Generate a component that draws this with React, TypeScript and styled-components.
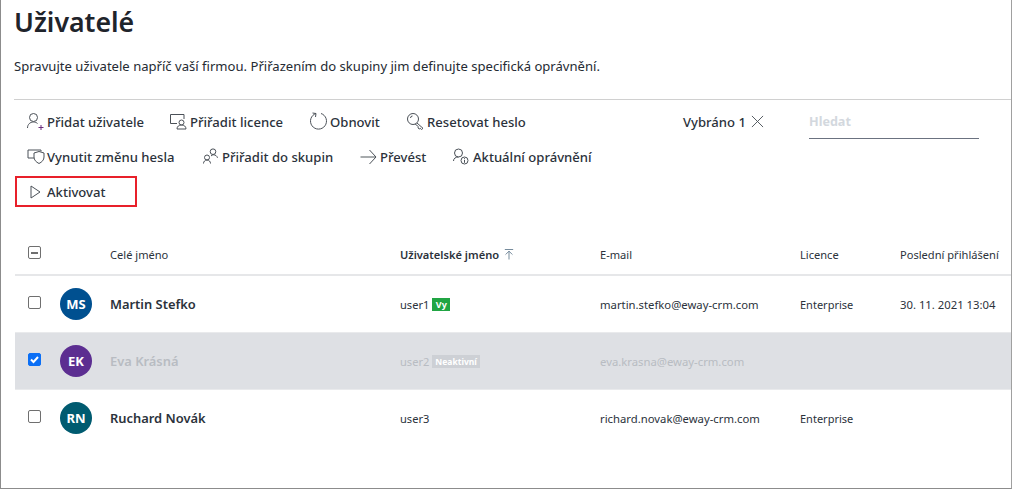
import React from 'react';
import styled, { createGlobalStyle } from 'styled-components';

const GlobalStyle = createGlobalStyle`
  html, body {
    margin: 0;
    padding: 0;
    background: #fff;
  }
  body {
    font-family: 'Noto Sans', 'Open Sans', sans-serif;
    color: #252b33;
  }
`;

const Page = styled.div`
  box-sizing: border-box;
  width: 1012px;
  height: 489px;
  overflow: hidden;
  border: solid 1px #8c8c8c;
  border-top: none;
  border-right-color: #a0a0a0;
`;

const Heading = styled.div`
  height: 99px;
  margin-left: 13px;
  border-bottom: solid 1px #d0d0d0;
  h1 {
    margin: 0;
    padding-top: 4px;
    font-size: 26.7px;
    line-height: 36px;
    font-weight: 600;
    color: #1f242b;
  }
  p {
    margin: 17px 0 0;
    font-size: 13.08px;
    line-height: 18px;
    color: #252b33;
  }
`;

const Toolbar = styled.div`
  display: grid;
  grid-template-columns: 1fr 330px;
  height: 134px;
  padding-left: 14px;
`;

const Commands = styled.div`
  display: flex;
  flex-direction: column;
  padding-top: 4px;
`;

const CommandRow = styled.div`
  display: flex;
  height: 35px;
  align-items: center;
  padding-left: 11px;
`;

const Command = styled.div<{ $width: number }>`
  display: flex;
  align-items: center;
  gap: 1px;
  width: ${({ $width }) => $width}px;
  font-size: 13.1px;
  font-weight: 500;
  color: #2b323b;
  white-space: nowrap;
  svg {
    flex: none;
    width: 20px;
    height: 20px;
  }
`;

const HighlightBox = styled.div`
  box-sizing: border-box;
  display: flex;
  align-items: center;
  width: 122px;
  height: 31px;
  margin-left: -11px;
  padding-left: 9px;
  border: solid 2px #e8202a;
`;

const SelectionArea = styled.div`
  display: grid;
  grid-template-columns: 128px 170px;
  align-items: start;
`;

const Selection = styled.div`
  display: flex;
  gap: 5px;
  padding-top: 12px;
  height: 20px;
  padding-left: 2px;
  font-size: 13.1px;
  font-weight: 500;
  line-height: 20px;
  color: #2b323b;
  svg {
    width: 13px;
    height: 13px;
    margin-top: 3px;
  }
`;

const SearchBox = styled.div`
  box-sizing: border-box;
  height: 39px;
  padding-top: 12px;
  border-bottom: solid 1px #6b7280;
  font-size: 12.6px;
  font-weight: 700;
  line-height: 20px;
  color: #d3d8de;
`;

const Row = styled.div<{ $selected?: boolean }>`
  display: grid;
  grid-template-columns: 45px 50px 290px 200px 200px 100px 1fr;
  align-items: center;
  height: 56px;
  margin-left: 14px;
  border-bottom: solid 1px #e9eaec;
  background: ${({ $selected }) => ($selected ? '#dee0e4' : 'transparent')};
  font-size: 11.3px;
  color: ${({ $selected }) => ($selected ? '#b8bcc2' : '#2b323b')};
  white-space: nowrap;
  &:last-child {
    border-bottom: none;
  }
`;

const HeaderRow = styled(Row)`
  box-sizing: border-box;
  height: 42px;
  border-bottom: solid 2px #e6e7e9;
`;

const HeaderCell = styled.div<{ $sorted?: boolean }>`
  display: flex;
  align-items: center;
  gap: 5px;
  font-size: 11.1px;
  font-weight: ${({ $sorted }) => ($sorted ? 600 : 400)};
  svg {
    width: 10px;
    height: 13px;
  }
`;

const Check = styled.div<{ $checked?: boolean }>`
  box-sizing: border-box;
  display: flex;
  align-items: center;
  justify-content: center;
  width: 13px;
  height: 13px;
  margin-left: 13px;
  margin-top: -3px;
  border-radius: 2px;
  border: solid 1px ${({ $checked }) => ($checked ? '#0b6ff5' : '#6f6f6f')};
  background: ${({ $checked }) => ($checked ? '#0b6ff5' : '#fff')};
  svg {
    width: 11px;
    height: 11px;
  }
`;

const Dash = styled.span`
  width: 7px;
  height: 2px;
  background: #6f6f6f;
`;

const Avatar = styled.div<{ $color: string }>`
  display: flex;
  align-items: center;
  justify-content: center;
  width: 32px;
  height: 32px;
  border-radius: 50%;
  background: ${({ $color }) => $color};
  color: #fff;
  font-size: 13px;
  font-weight: 700;
`;

const Name = styled.div<{ $selected?: boolean }>`
  font-size: 12.9px;
  font-weight: 600;
  color: ${({ $selected }) => ($selected ? '#b8bcc2' : '#2b323b')};
`;

const UserCell = styled.div`
  display: flex;
  align-items: center;
  gap: 3px;
  font-size: 11.1px;
`;

const LicenceCell = styled.div`
  font-size: 11px;
`;

const Tag = styled.span<{ $color: string; $faded?: boolean }>`
  padding: 0 ${({ $faded }) => ($faded ? 3 : 3.5)}px;
  height: 13px;
  line-height: 13px;
  font-size: ${({ $faded }) => ($faded ? 8.5 : 9)}px;
  font-weight: 700;
  color: #fff;
  background: ${({ $color }) => $color};
`;

const users = [
  {
    initials: 'MS',
    color: '#005090',
    name: 'Martin Stefko',
    user: 'user1',
    email: 'martin.stefko@eway-crm.com',
    licence: 'Enterprise',
    login: '30. 11. 2021 13:04',
  },
  {
    initials: 'EK',
    color: '#5c2e91',
    name: 'Eva Krásná',
    user: 'user2',
    email: 'eva.krasna@eway-crm.com',
    licence: '',
    login: '',
    selected: true,
  },
  {
    initials: 'RN',
    color: '#005b70',
    name: 'Ruchard Novák',
    user: 'user3',
    email: 'richard.novak@eway-crm.com',
    licence: 'Enterprise',
    login: '',
  },
];

const stroke = { fill: 'none', stroke: '#4b5158', strokeWidth: 1 };

const AddUserIcon = () => (
  <svg viewBox="0 0 20 20" {...stroke}>
    <circle cx="7.500" cy="5.500" r="4" />
    <path d="M1.500 16c0-3.600 2.600-6 6-6 1.800 0 3 .6 4 1.500" />
    <path d="M12.500 15.500h5M15 13v5" stroke="#6b2c7d" />
  </svg>
);

const LicenceIcon = () => (
  <svg viewBox="0 0 20 20" {...stroke}>
    <path d="M8 11.500H1.500V2.500h13.500V7" />
    <circle cx="12.500" cy="10.500" r="2.500" />
    <path d="M8 17c0-2.700 2-4 4.500-4s4.500 1.300 4.500 4z" />
  </svg>
);

const RefreshIcon = () => (
  <svg viewBox="0 0 20 20" {...stroke}>
    <path d="M7 1.500a8 8 0 1 0 5 0" />
    <path d="M3.500 1l3.500.5-.5 3.500" />
  </svg>
);

const KeyIcon = () => (
  <svg viewBox="0 0 20 20" {...stroke}>
    <circle cx="7" cy="7" r="5.500" />
    <path d="M11 11l6 5.300-1.500 1.200-1.300-1.200-1 .8-1.200-1.300.5-1-3.500-3" />
    <path d="M4.500 6a2 2 0 0 1 2-2" />
  </svg>
);

const ShieldIcon = () => (
  <svg viewBox="0 0 20 20" {...stroke}>
    <path d="M8 11H2V3h13v1.500" />
    <path d="M13 4.500l5 1.500v4c0 3-2 5-5 6.500-3-1.500-5-3.500-5-6.500V6z" />
  </svg>
);

const GroupIcon = () => (
  <svg viewBox="0 0 20 20" {...stroke}>
    <circle cx="12" cy="4.700" r="2.800" />
    <circle cx="6" cy="10.500" r="2.500" />
    <path d="M2.500 16.500c0-2 1.500-3.500 3.500-3.500s3.500 1.500 3.500 3.500" />
    <path d="M10 9c.7-.8 1.500-1.200 2.500-1.200 2 0 3.500 1.200 4 3" />
  </svg>
);

const ArrowIcon = () => (
  <svg viewBox="0 0 20 20" {...stroke}>
    <path d="M1.500 10h15" strokeWidth="1.500" stroke="#8a8f92" />
    <path d="M10.500 3l6.500 7-6.500 7" />
  </svg>
);

const PermissionIcon = () => (
  <svg viewBox="0 0 20 20" {...stroke}>
    <circle cx="6.500" cy="6" r="4" />
    <path d="M1.500 14c0-2.500 2-4 5-4" />
    <circle cx="12.500" cy="13.500" r="3.500" />
    <path d="M12.500 13v2.800M12.500 11.200v1" />
  </svg>
);

const PlayIcon = () => (
  <svg viewBox="0 0 20 20" {...stroke}>
    <path d="M5 4l9 6-9 6z" />
  </svg>
);

const CloseIcon = () => (
  <svg viewBox="0 0 14 14" {...stroke}>
    <path d="M1 1l12 12M13 1L1 13" />
  </svg>
);

const SortIcon = () => (
  <svg viewBox="0 0 12 14" {...stroke} stroke="#5a7488">
    <path d="M1 1h10M6 13V3M2 7l4-4 4 4" />
  </svg>
);

const App: React.FC = () => {
  return (
    <Page>
      <GlobalStyle />
      <Heading>
        <h1>Uživatelé</h1>
        <p>Spravujte uživatele napříč vaší firmou. Přiřazením do skupiny jim definujte specifická oprávnění.</p>
      </Heading>
      <Toolbar>
        <Commands>
          <CommandRow>
            <Command $width={143}><AddUserIcon />Přidat uživatele</Command>
            <Command $width={140}><LicenceIcon />Přiřadit licence</Command>
            <Command $width={97}><RefreshIcon />Obnovit</Command>
            <Command $width={140}><KeyIcon />Resetovat heslo</Command>
          </CommandRow>
          <CommandRow>
            <Command $width={175}><ShieldIcon />Vynutit změnu hesla</Command>
            <Command $width={158}><GroupIcon />Přiřadit do skupin</Command>
            <Command $width={93}><ArrowIcon />Převést</Command>
            <Command $width={150}><PermissionIcon />Aktuální oprávnění</Command>
          </CommandRow>
          <CommandRow>
            <HighlightBox>
              <Command $width={100}><PlayIcon />Aktivovat</Command>
            </HighlightBox>
          </CommandRow>
        </Commands>
        <SelectionArea>
          <Selection>Vybráno 1 <CloseIcon /></Selection>
          <SearchBox>Hledat</SearchBox>
        </SelectionArea>
      </Toolbar>
      <HeaderRow>
        <Check><Dash /></Check>
        <div />
        <HeaderCell>Celé jméno</HeaderCell>
        <HeaderCell $sorted>Uživatelské jméno <SortIcon /></HeaderCell>
        <HeaderCell>E-mail</HeaderCell>
        <HeaderCell>Licence</HeaderCell>
        <HeaderCell>Poslední přihlášení</HeaderCell>
      </HeaderRow>
      {users.map((u) => (
        <Row key={u.user} $selected={u.selected}>
          <Check $checked={u.selected}>
            {u.selected && (
              <svg viewBox="0 0 11 11">
                <path d="M2 5.500l2.500 2.500L9 3" fill="none" stroke="#fff" strokeWidth="2" />
              </svg>
            )}
          </Check>
          <Avatar $color={u.color}>{u.initials}</Avatar>
          <Name $selected={u.selected}>{u.name}</Name>
          <UserCell>
            {u.user}
            {u.user === 'user1' && <Tag $color="#21a544">Vy</Tag>}
            {u.user === 'user2' && <Tag $color="#cdd0d5" $faded>Neaktivní</Tag>}
          </UserCell>
          <div>{u.email}</div>
          <LicenceCell>{u.licence}</LicenceCell>
          <div>{u.login}</div>
        </Row>
      ))}
    </Page>
  );
};

export default App;
